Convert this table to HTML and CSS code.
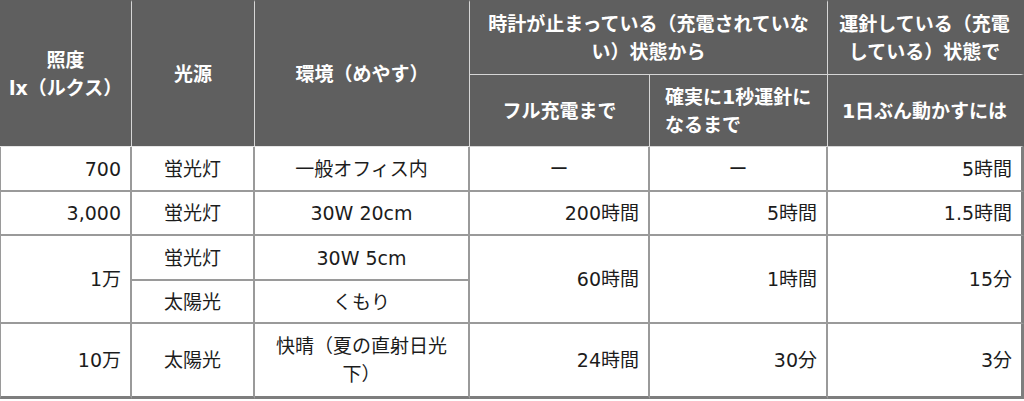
FILE: index.html
```html
<!DOCTYPE html>
<html lang="ja">
<head>
<meta charset="utf-8">
<title>照度と充電時間</title>
<link rel="stylesheet" href="styles.css">
</head>
<body>
<table class="charge-table">
  <colgroup>
    <col class="c1"><col class="c2"><col class="c3"><col class="c4"><col class="c5"><col class="c6">
  </colgroup>
  <thead>
    <tr class="h1">
      <th rowspan="2" class="first">照度<br>lx（ルクス）</th>
      <th rowspan="2">光源</th>
      <th rowspan="2">環境（めやす）</th>
      <th colspan="2">時計が止まっている（充電されていない）状態から</th>
      <th class="last">運針している（充電している）状態で</th>
    </tr>
    <tr class="h2">
      <th>フル充電まで</th>
      <th class="left">確実に1秒運針になるまで</th>
      <th class="last">1日ぶん動かすには</th>
    </tr>
  </thead>
  <tbody>
    <tr class="r45">
      <td class="first num">700</td>
      <td class="ctr">蛍光灯</td>
      <td class="ctr">一般オフィス内</td>
      <td class="ctr">ー</td>
      <td class="ctr">ー</td>
      <td class="num last">5時間</td>
    </tr>
    <tr class="r44">
      <td class="first num">3,000</td>
      <td class="ctr">蛍光灯</td>
      <td class="ctr">30W 20cm</td>
      <td class="num">200時間</td>
      <td class="num">5時間</td>
      <td class="num last">1.5時間</td>
    </tr>
    <tr class="r45">
      <td rowspan="2" class="first num">1万</td>
      <td class="ctr">蛍光灯</td>
      <td class="ctr">30W 5cm</td>
      <td rowspan="2" class="num">60時間</td>
      <td rowspan="2" class="num">1時間</td>
      <td rowspan="2" class="num last">15分</td>
    </tr>
    <tr class="r43">
      <td class="ctr">太陽光</td>
      <td class="ctr">くもり</td>
    </tr>
    <tr class="r73 bottom">
      <td class="first num">10万</td>
      <td class="ctr">太陽光</td>
      <td class="ctr">快晴（夏の直射日光下）</td>
      <td class="num">24時間</td>
      <td class="num">30分</td>
      <td class="num last">3分</td>
    </tr>
  </tbody>
</table>
</body>
</html>
```

FILE: styles.css
```css
html, body {
  margin: 0;
  padding: 0;
  background: #ffffff;
}

body {
  font-family: "DejaVu Sans", "Noto Sans CJK JP", sans-serif;
  font-size: 19px;
  line-height: 28px;
  color: #1c1c1c;
}

.charge-table {
  width: 1024px;
  table-layout: fixed;
  border-collapse: separate;
  border-spacing: 0;
}

.c1 { width: 132px; }
.c2 { width: 123px; }
.c3 { width: 215px; }
.c4 { width: 180px; }
.c5 { width: 178px; }
.c6 { width: 196px; }

.charge-table th,
.charge-table td {
  box-sizing: border-box;
  padding: 0 9px;
  vertical-align: middle;
}

/* header */
.charge-table thead {
  background: #5f5f5f;
}

.charge-table th {
  color: #ffffff;
  font-weight: bold;
  text-align: center;
  border-right: 1px solid #d6d6d6;
  border-bottom: 1px solid #d6d6d6;
}

.charge-table .h1 th {
  border-top: 2px solid #5f5f5f;
}

.charge-table .h1 th[rowspan] {
  border-bottom-color: #e6e6e6;
}

.charge-table .h1 { height: 75px; }
.charge-table .h2 { height: 72px; }

.charge-table th.last {
  border-right: 3px solid #5f5f5f;
}

.charge-table th.left {
  text-align: left;
  padding-left: 15px;
}

/* body */
.charge-table td {
  border-right: 2px solid #9a9a9a;
  border-bottom: 2px solid #9a9a9a;
}

.charge-table td.first {
  border-left: 1px solid #9a9a9a;
}

.charge-table td.last {
  border-right: 3px solid #7e7e7e;
}

.charge-table .bottom td {
  border-bottom: 3px solid #7e7e7e;
}

.charge-table .num { text-align: right; }
.charge-table .ctr { text-align: center; }

.r45 { height: 45px; }
.r44 { height: 44px; }
.r43 { height: 43px; }
.r73 { height: 75px; }
```
